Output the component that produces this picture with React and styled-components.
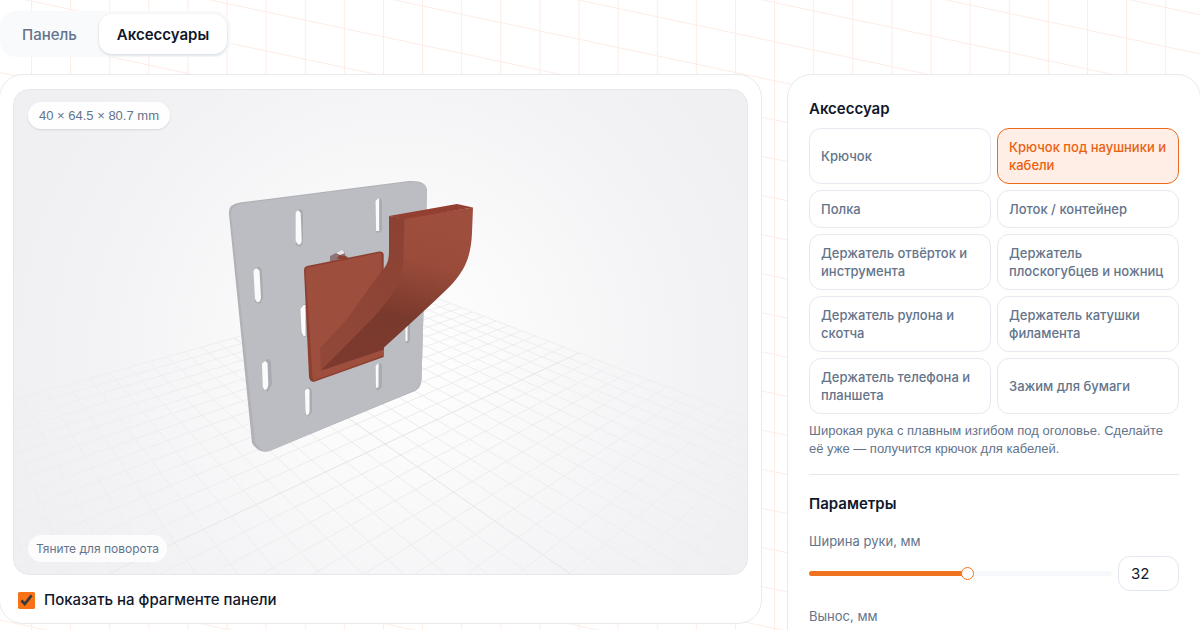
import React, { useState } from "react";
import styled, { createGlobalStyle } from "styled-components";

const GlobalStyle = createGlobalStyle`
  *, *::before, *::after { box-sizing: border-box; }
  body {
    margin: 0;
    background: #ffffff;
    color: #0f172a;
    font-family: Inter, "Liberation Sans", sans-serif;
  }
  button, input { font: inherit; color: inherit; }
`;

const Page = styled.div`
  position: relative;
  height: 100vh;
  overflow: hidden;
`;

const Backdrop = styled.svg`
  position: absolute;
  inset: 0;
  width: 100%;
  height: 100%;
`;

const Shell = styled.main`
  position: relative;
  padding-top: 11px;
`;

const Tabs = styled.div`
  display: inline-flex;
  gap: 4px;
  padding: 3px 4px;
  border-radius: 16px;
  background: #f8fafc;
`;

const Tab = styled.button`
  height: 40px;
  padding: 0 18px;
  border: 0;
  border-radius: 13px;
  font-size: 15px;
  font-weight: ${(p) => (p.$active ? 600 : 500)};
  color: ${(p) => (p.$active ? "#0f172a" : "#64748b")};
  background: ${(p) => (p.$active ? "#ffffff" : "transparent")};
  box-shadow: ${(p) => (p.$active ? "0 1px 3px rgba(15, 23, 42, 0.16)" : "none")};
`;

const Columns = styled.div`
  display: grid;
  grid-template-columns: minmax(0, 763fr) minmax(0, 414fr);
  align-items: start;
  gap: 25px;
  margin: 17px -1px 0;
`;

const Card = styled.section`
  border: 1px solid #e8eaed;
  border-radius: 24px;
  background: #ffffff;
`;

const PreviewCard = styled(Card)`
  padding: 14px 13px 13px;
`;

const SettingsCard = styled(Card)`
  padding: 22px 21px;
`;

const Viewer = styled.div`
  position: relative;
  aspect-ratio: 735 / 486;
  border: 1px solid #e6e7ee;
  border-radius: 16px;
  overflow: hidden;
  background: radial-gradient(circle at 52% 54%, #ffffff 0%, #fafafb 28%, #f3f3f5 62%, #f0f0f3 85%);
`;

const Scene = styled.svg`
  display: block;
  width: 100%;
  height: 100%;
`;

const Badge = styled.span`
  position: absolute;
  left: 14px;
  border-radius: 14px;
  line-height: 27px;
  color: #64748b;
`;

const SizeBadge = styled(Badge)`
  top: 12px;
  padding: 0 11px;
  font-family: "Liberation Sans", sans-serif;
  font-size: 13px;
  background: rgba(255, 255, 255, 0.9);
  box-shadow: 0 1px 2px rgba(15, 23, 42, 0.12);
`;

const Hint = styled(Badge)`
  bottom: 12px;
  padding: 0 8px;
  font-size: 12px;
  background: rgba(255, 255, 255, 0.8);
`;

const CheckRow = styled.label`
  display: flex;
  align-items: center;
  gap: 9px;
  margin-top: 15px;
  padding-left: 5px;
  font-size: 15px;
  line-height: 20px;
  font-weight: 500;
`;

const Checkbox = styled.input`
  width: 17px;
  height: 17px;
  margin: 0;
  accent-color: #f97316;
`;

const Heading = styled.h2`
  margin: 0;
  font-size: 15px;
  line-height: 24px;
  font-weight: 600;
`;

const Options = styled.div`
  display: grid;
  grid-template-columns: repeat(2, minmax(0, 1fr));
  gap: 6px;
  margin-top: 7px;
`;

const Option = styled.button`
  padding: 9px 11px;
  border: 1px solid ${(p) => (p.$active ? "#ea6a1f" : "#e5e9f0")};
  border-radius: 12px;
  font-size: 13px;
  line-height: 18px;
  font-weight: 500;
  text-align: left;
  color: ${(p) => (p.$active ? "#ea6110" : "#64748b")};
  background: ${(p) => (p.$active ? "#ffeee6" : "#ffffff")};
`;

const Description = styled.p`
  margin: 8px 0 0;
  font-family: "Liberation Sans", sans-serif;
  font-size: 13px;
  line-height: 18px;
  color: #64748b;
`;

const Divider = styled.hr`
  margin: 16px 0 17px;
  border: 0;
  border-top: 1px solid #e5e7eb;
`;

const Field = styled.div`
  display: grid;
  grid-template-columns: minmax(0, 1fr) 61px;
  align-items: center;
  gap: 6px;
  margin-top: 16px;
`;

const FieldLabel = styled.label`
  grid-column: 1 / -1;
  font-size: 13px;
  line-height: 18px;
  color: #64748b;
`;

const Range = styled.input`
  appearance: none;
  width: 100%;
  height: 13px;
  margin: 0;
  background: transparent;

  &::-webkit-slider-runnable-track {
    height: 5px;
    border-radius: 3px;
    background: linear-gradient(to right, #f07420 ${(p) => p.$fill}%, #f6f8fb ${(p) => p.$fill}%);
  }
  &::-webkit-slider-thumb {
    appearance: none;
    width: 13px;
    height: 13px;
    margin-top: -4px;
    border: 1px solid #f07420;
    border-radius: 50%;
    background: #ffffff;
  }
`;

const NumberBox = styled.input`
  width: 100%;
  height: 35px;
  padding: 0 12px;
  border: 1px solid #e2e8f0;
  border-radius: 12px;
  font-size: 15px;
  color: #0f172a;
  background: #ffffff;
`;

const OPTIONS = [
  "Крючок",
  "Крючок под наушники и кабели",
  "Полка",
  "Лоток / контейнер",
  "Держатель отвёрток и инструмента",
  "Держатель плоскогубцев и ножниц",
  "Держатель рулона и скотча",
  "Держатель катушки филамента",
  "Держатель телефона и планшета",
  "Зажим для бумаги",
];

const CAMERA = { x: 381, y: 332, focal: 587, cos: 0.9167, sin: 0.3997 };
const HALF = 0.99;
const STEPS = 14;

function project(a, b) {
  const right = 0.0119 + a * 0.776 + b * 0.631;
  const forward = 1.4625 + a * 0.631 - b * 0.776;
  const depth = forward * CAMERA.cos + CAMERA.sin;
  const drop = CAMERA.cos - forward * CAMERA.sin;
  return [
    CAMERA.x + (CAMERA.focal * right) / depth,
    CAMERA.y + (CAMERA.focal * drop) / depth,
  ].map((v) => v.toFixed(1));
}

function gridLine(from, to) {
  return `M${project(...from).join(" ")}L${project(...to).join(" ")}`;
}

const minorLines = [];
const axisLines = [];
for (let i = -STEPS; i <= STEPS; i += 1) {
  const t = (i / STEPS) * HALF;
  const pair = [gridLine([t, -HALF], [t, HALF]), gridLine([-HALF, t], [HALF, t])];
  (i === 0 ? axisLines : minorLines).push(...pair);
}

const SLOTS = [
  ["M299 209q4 0 4 4v30l-3 4-4-2z", "M295.7 213q2-5 5 0l1 28q-1 5-4 3l-2-3z"],
  ["M378 198q4 0 4 4v28l-3 3-3-1z", "M375.6 201l3-3 .5 1v32l-3 0z"],
  ["M257 267q5 0 5 5l1 26-3 6-5-2z", "M253.5 271q3-5 6 0l1.500 27q-1 5-4 4l-2-3z"],
  ["M266 359q5 0 5 5l1 20-4 8-4-3z", "M262 364q3-5 5.500-1l.8 22q-1 5-3.500 5l-2-3z"],
  ["M308 387q4 1 4 5v20l-4 5-3-3z", "M305 391q2-4 4.500-1v22q-1 4-3 3l-1-3z"],
  ["M379 363q3 0 3 4v20l-4 4-2-2z", "M375.700 366l2.500-3 .3 1v23l-2.500 1z"],
  ["M303 304h4v33l-4-1-2-4v-23z", "M300.500 309l3-4h2v31h-2l-2-4z"],
  ["M408 322l2 0v19l-3 3-1-2z", "M405.500 324h2v17l-2 0z"],
];

function Model() {
  return (
    <Scene viewBox="14 90 733 484" preserveAspectRatio="xMidYMid slice" aria-hidden="true">
      <defs>
        <linearGradient id="front" gradientUnits="userSpaceOnUse" x1="430" y1="225" x2="398" y2="350">
          <stop offset="0" stopColor="#9e4e3d" />
          <stop offset="0.3" stopColor="#9a4b3a" />
          <stop offset="0.6" stopColor="#843f31" />
          <stop offset="0.75" stopColor="#79392d" />
          <stop offset="1" stopColor="#7b3a2d" />
        </linearGradient>
        <linearGradient id="side" gradientUnits="userSpaceOnUse" x1="396" y1="220" x2="330" y2="365">
          <stop offset="0" stopColor="#8c4233" />
          <stop offset="1" stopColor="#924838" />
        </linearGradient>
        <radialGradient id="fade" gradientUnits="userSpaceOnUse" cx="385" cy="420" r="400">
          <stop offset="0" stopColor="#ffffff" />
          <stop offset="1" stopColor="#ffffff" stopOpacity="0.5" />
        </radialGradient>
        <mask id="fadeMask" maskUnits="userSpaceOnUse" x="13" y="89" width="735" height="486">
          <rect x="13" y="89" width="735" height="486" fill="url(#fade)" />
        </mask>
      </defs>
      <g mask="url(#fadeMask)" fill="none">
        <path d={minorLines.join("")} stroke="#ebebed" strokeWidth="1" />
        <path d={axisLines.join("")} stroke="#e2e2e4" strokeWidth="1" />
      </g>
      <path
        d="M229 214Q228 204 240 202.500L409 181Q426 180 427 190L421.500 380Q421 388 415 391L269 451Q259 454 252 443Z"
        fill="#b0b2b7"
      />
      <path
        d="M231 214Q231 205 243 203.500L409 182Q426 181 427 191L421.500 379Q420 387 414 390.500L270 451Q260 453 255 442Z"
        fill="#bcbdc3"
      />
      {SLOTS.map(([rim, hole]) => (
        <g key={rim}>
          <path d={rim} fill="#a9abb1" />
          <path d={hole} fill="#fbfbfc" />
        </g>
      ))}
      <path d="M330 256l6-3 4-2 5 1v3l5 4-20 3z" fill="#8d7477" />
      <path d="M336 253l6-3 3 3-5 2z" fill="#e9e7ea" />
      <path d="M337 259l2-4 6 1 4 3z" fill="#8f4031" />
      <path d="M304 270Q304 267 307 266L379 251.500Q383.700 251 383.700 255V357L315 381.500Q310 383 309 377Z" fill="#8d4031" />
      <path d="M305.500 270Q305.500 268 308 267.500L379 253Q381.500 252.500 381.500 256L383.500 355.500L315 380Q313 380.500 312.500 377Z" fill="#9e4e3d" />
      <path d="M389 216L408 219L408 257L400 300L372 330L321 370.500L320 348L347 319L377 277C386 266 389 264 389 250Z" fill="url(#side)" />
      <path
        d="M404.500 218L473 207.500L472 233C471 255 466 268 453 283Q443 294 384 347.500V349.500L320.700 370.700L371 320C393 297 403 280 403.500 257Z"
        fill="url(#front)"
      />
      <path d="M389 216L457 204L473 207.500L404.500 219Z" fill="#933f31" />
    </Scene>
  );
}

function Slider({ id, label, min, max, initial }) {
  const [value, setValue] = useState(initial);
  const fill = ((value - min) / (max - min)) * 100;
  const change = (e) => setValue(Number(e.target.value));
  return (
    <Field>
      <FieldLabel htmlFor={id}>{label}</FieldLabel>
      <Range id={id} type="range" min={min} max={max} value={value} $fill={fill} onChange={change} />
      <NumberBox aria-label={label} inputMode="numeric" value={value} onChange={change} />
    </Field>
  );
}

export default function App() {
  const [tab, setTab] = useState(1);
  const [selected, setSelected] = useState(1);
  return (
    <Page>
      <GlobalStyle />
      <Backdrop aria-hidden="true">
        <defs>
          <pattern
            id="mesh"
            width="39.11"
            height="39.11"
            x="31"
            y="33"
            patternUnits="userSpaceOnUse"
            patternTransform="skewY(12)"
          >
            <path d="M0.500 0V39.110M0 0.500H39.110" stroke="#feece4" fill="none" />
          </pattern>
        </defs>
        <rect width="100%" height="100%" fill="url(#mesh)" />
      </Backdrop>
      <Shell>
        <Tabs>
          {["Панель", "Аксессуары"].map((name, i) => (
            <Tab key={name} type="button" $active={tab === i} onClick={() => setTab(i)}>
              {name}
            </Tab>
          ))}
        </Tabs>
        <Columns>
          <PreviewCard>
            <Viewer>
              <Model />
              <SizeBadge>40 × 64.5 × 80.7 mm</SizeBadge>
              <Hint>Тяните для поворота</Hint>
            </Viewer>
            <CheckRow>
              <Checkbox type="checkbox" defaultChecked />
              Показать на фрагменте панели
            </CheckRow>
          </PreviewCard>
          <SettingsCard>
            <Heading>Аксессуар</Heading>
            <Options>
              {OPTIONS.map((name, i) => (
                <Option key={name} type="button" $active={selected === i} onClick={() => setSelected(i)}>
                  {name}
                </Option>
              ))}
            </Options>
            <Description>
              Широкая рука с плавным изгибом под оголовье. Сделайте её уже — получится крючок для кабелей.
            </Description>
            <Divider />
            <Heading>Параметры</Heading>
            <Slider id="width" label="Ширина руки, мм" min={10} max={52} initial={32} />
            <Slider id="reach" label="Вынос, мм" min={20} max={100} initial={60} />
          </SettingsCard>
        </Columns>
      </Shell>
    </Page>
  );
}
